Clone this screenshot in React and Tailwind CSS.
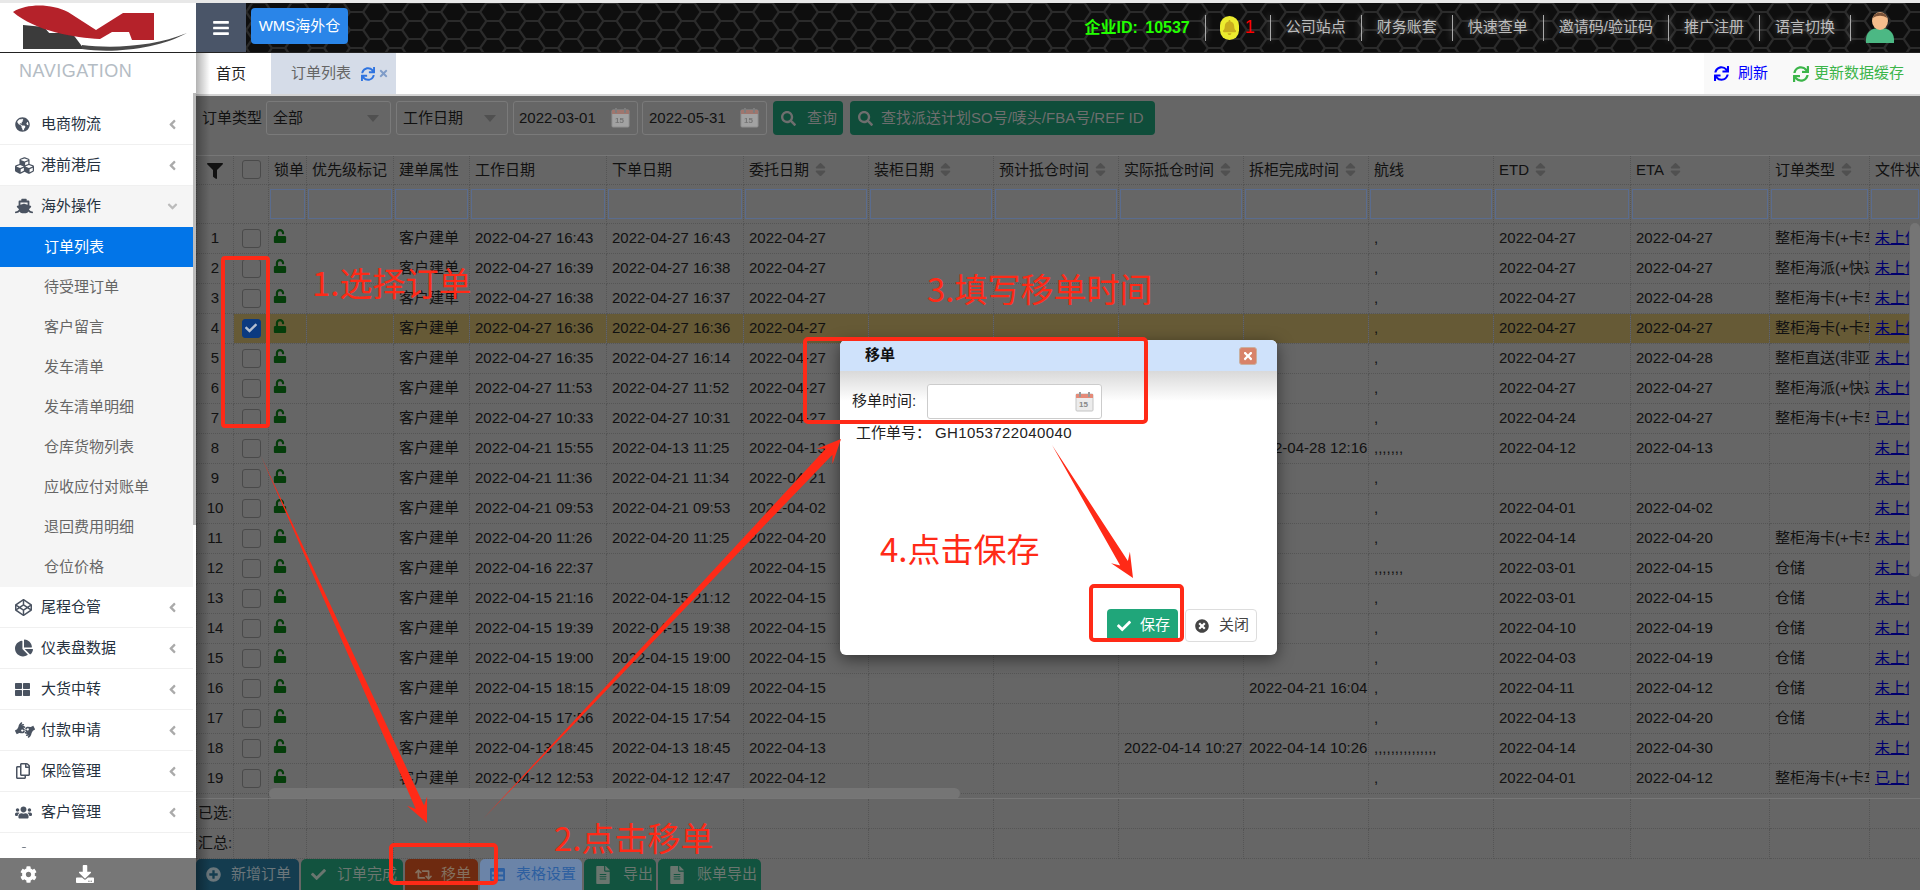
import React from 'react';
import {
  FaBars, FaBell, FaChartPie, FaCheck, FaCodepen, FaCog, FaCubes, FaDownload, FaFileAlt, FaFilter,
  FaGlobeAmericas, FaPlusCircle, FaRegCopy, FaRetweet, FaSearch, FaShip, FaSort, FaSync, FaTable,
  FaThLarge, FaTimes, FaTimesCircle, FaUnlock, FaUsers, FaAmericanSignLanguageInterpreting,
  FaAngleLeft, FaAngleDown,
} from 'react-icons/fa';

const colWidths = [37, 35, 38, 87, 76, 137, 137, 125, 125, 125, 125, 125, 125, 137, 139, 100, 51];

const heads = [
  ['锁单'], ['优先级标记'], ['建单属性'], ['工作日期'], ['下单日期'], ['委托日期', 1], ['装柜日期', 1],
  ['预计抵仓时间', 1], ['实际抵仓时间', 1], ['拆柜完成时间', 1], ['航线'], ['ETD', 1], ['ETA', 1], ['订单类型', 1], ['文件状态'],
];

const ka = '整柜海卡(+卡车派送)';
const pai = '整柜海派(+快递派送)';
const up = '未上传';

// work, order, entrust, actual, unpack, route, etd, eta, type, file
const rows = [
  ['2022-04-27 16:43', '2022-04-27 16:43', '2022-04-27', '', '', ',', '2022-04-27', '2022-04-27', ka, up],
  ['2022-04-27 16:39', '2022-04-27 16:38', '2022-04-27', '', '', ',', '2022-04-27', '2022-04-27', pai, up],
  ['2022-04-27 16:38', '2022-04-27 16:37', '2022-04-27', '', '', ',', '2022-04-27', '2022-04-28', ka, up],
  ['2022-04-27 16:36', '2022-04-27 16:36', '2022-04-27', '', '', ',', '2022-04-27', '2022-04-27', ka, up],
  ['2022-04-27 16:35', '2022-04-27 16:14', '2022-04-27', '', '', ',', '2022-04-27', '2022-04-28', '整柜直送(非亚马逊)', up],
  ['2022-04-27 11:53', '2022-04-27 11:52', '2022-04-27', '', '', ',', '2022-04-27', '2022-04-27', pai, up],
  ['2022-04-27 10:33', '2022-04-27 10:31', '2022-04-27', '', '', ',', '2022-04-24', '2022-04-27', ka, '已上传'],
  ['2022-04-21 15:55', '2022-04-13 11:25', '2022-04-13', '', '2022-04-28 12:16', ',,,,,,,', '2022-04-12', '2022-04-13', '', up],
  ['2022-04-21 11:36', '2022-04-21 11:34', '2022-04-21', '', '', ',', '', '', '', up],
  ['2022-04-21 09:53', '2022-04-21 09:53', '2022-04-02', '', '', ',', '2022-04-01', '2022-04-02', '', up],
  ['2022-04-20 11:26', '2022-04-20 11:25', '2022-04-20', '', '', ',', '2022-04-14', '2022-04-20', ka, up],
  ['2022-04-16 22:37', '', '2022-04-15', '', '', ',,,,,,,', '2022-03-01', '2022-04-15', '仓储', up],
  ['2022-04-15 21:16', '2022-04-15 21:12', '2022-04-15', '', '', ',', '2022-03-01', '2022-04-15', '仓储', up],
  ['2022-04-15 19:39', '2022-04-15 19:38', '2022-04-15', '', '', ',', '2022-04-10', '2022-04-19', '仓储', up],
  ['2022-04-15 19:00', '2022-04-15 19:00', '2022-04-15', '', '', ',', '2022-04-03', '2022-04-19', '仓储', up],
  ['2022-04-15 18:15', '2022-04-15 18:09', '2022-04-15', '', '2022-04-21 16:04', ',', '2022-04-11', '2022-04-12', '仓储', up],
  ['2022-04-15 17:56', '2022-04-15 17:54', '2022-04-15', '', '', ',', '2022-04-13', '2022-04-20', '仓储', up],
  ['2022-04-13 18:45', '2022-04-13 18:45', '2022-04-13', '2022-04-14 10:27', '2022-04-14 10:26', ',,,,,,,,,,,,,,,', '2022-04-14', '2022-04-30', '', up],
  ['2022-04-12 12:53', '2022-04-12 12:47', '2022-04-12', '', '', ',', '2022-04-01', '2022-04-12', ka, '已上传'],
];

const cell = 'border border-dotted border-[#555] px-[5px] overflow-hidden whitespace-nowrap';

const Cols = () => (
  <colgroup>
    {colWidths.map((w, i) => <col key={i} style={{ width: w }} />)}
  </colgroup>
);

const Check = ({ on }) => (
  <div className={`w-[19px] h-[19px] rounded-[3px] border-[1.5px] mx-auto flex items-center justify-center ${on ? 'bg-[#0b3a80] border-[#0b3a80]' : 'border-[#4a4a4a]'}`}>
    {on && <FaCheck className="text-[#b4bfd0] text-[12px]" />}
  </div>
);

const Row = ({ r, no }) => {
  const hl = no === 4 ? 'bg-[#665a36]' : '';
  const td = `${cell} ${hl}`;
  return (
    <tr className="h-[30px]">
      <td className={`${cell} text-center !px-0`}>{no}</td>
      <td className={`${td} !px-0`}><Check on={no === 4} /></td>
      <td className={`${td} align-top !px-0`}><FaUnlock className="text-[#053d0a] text-[14px] mt-[5px] ml-[4px]" /></td>
      <td className={td}></td>
      <td className={td}>客户建单</td>
      <td className={td}>{r[0]}</td>
      <td className={td}>{r[1]}</td>
      <td className={td}>{r[2]}</td>
      <td className={td}></td>
      <td className={td}></td>
      <td className={td}>{r[3]}</td>
      <td className={td}>{r[4]}</td>
      <td className={td}>{r[5]}</td>
      <td className={td}>{r[6]}</td>
      <td className={td}>{r[7]}</td>
      <td className={td}>{r[8]}</td>
      <td className={td}><span className="underline text-[#00006e]">{r[9]}</span></td>
    </tr>
  );
};

const OrderTable = () => (
  <div className="relative h-[644px] overflow-hidden">
    <table className="table-fixed border-collapse w-[1724px] text-[15px] text-[#111]">
      <Cols />
      <thead>
        <tr className="h-[29px] border-t border-[#777]">
          <th className={`${cell} font-normal !px-0`}><FaFilter className="text-[#111] text-[16px] mx-auto mt-[3px]" /></th>
          <th className={`${cell} font-normal !px-0`}><Check /></th>
          {heads.map(([t, sort]) => (
            <th key={t} className={`${cell} font-normal text-left`}>
              <span className="inline-flex items-center gap-[3px]">{t}{sort && <FaSort className="text-[#505050] text-[17px]" />}</span>
            </th>
          ))}
        </tr>
        <tr className="h-[39px]">
          <td className={cell}></td>
          <td className={cell}></td>
          {heads.map(([t]) => (
            <td key={t} className={`${cell} !px-[1px]`}>
              <div className="h-[30px] border border-[#5a6c8e]"></div>
            </td>
          ))}
        </tr>
      </thead>
      <tbody>
        {rows.map((r, i) => <Row key={i} r={r} no={i + 1} />)}
        <tr className="h-[30px]">
          <td className={cell}></td>
          <td className={`${cell} align-top !px-0 !pt-[5px]`}><Check /></td>
        </tr>
      </tbody>
    </table>
    {/* scrollbars */}
    <div className="absolute right-0 top-[68px] bottom-0 w-[11px] bg-[#666]">
      <div className="ml-[1px] w-[10px] h-[354px] rounded-full bg-[#757575]"></div>
    </div>
    <div className="absolute left-[73px] top-[633px] w-[691px] h-[11px] rounded-full bg-[#757575]"></div>
  </div>
);

const SummaryTable = () => (
  <table className="table-fixed border-collapse w-[1724px] text-[15px] text-[#111] border-t border-[#777]">
    <Cols />
    <tbody>
      {['已选:', '汇总:'].map((t) => (
        <tr key={t} className="h-[30px]">
          <td className={`${cell} !px-[1px]`}>{t}</td>
          {colWidths.slice(1).map((w, i) => <td key={i} className={cell}></td>)}
        </tr>
      ))}
    </tbody>
  </table>
);

const Calendar = () => (
  <svg width="19" height="20" viewBox="0 0 19 20">
    <rect x="1" y="2" width="17" height="17" rx="1" fill="#ececec" stroke="#c4c4c4" />
    <rect x="1" y="2" width="17" height="4" fill="#e58a78" />
    <rect x="4" y="0" width="2" height="5" fill="#999" />
    <rect x="13" y="0" width="2" height="5" fill="#999" />
    <text x="4" y="15" fontSize="8" fontWeight="700" fill="#888" fontFamily="Liberation Sans">15</text>
  </svg>
);

const DimCalendar = () => <div className="opacity-45"><Calendar /></div>;

const Dim = ({ className = '', children }) => (
  <div className={`h-[34px] border border-[#7a7a7a] rounded-[3px] flex items-center ${className}`}>{children}</div>
);

const Caret = () => <div className="ml-auto w-0 h-0 border-x-[6px] border-t-[7px] border-x-transparent border-t-[#505050]"></div>;

const Toolbar = () => (
  <div className="h-[59px] flex items-start pt-[5px] pl-[6px] text-[15px] text-[#111]">
    <span className="w-[60px] h-[34px] leading-[34px] whitespace-nowrap">订单类型</span>
    <Dim className="ml-[4px] w-[125px] pl-[6px] pr-[11px]">全部<Caret /></Dim>
    <Dim className="ml-[5px] w-[112px] pl-[6px] pr-[11px]">工作日期<Caret /></Dim>
    <Dim className="ml-[5px] w-[125px] pl-[5px] pr-[7px] justify-between">2022-03-01<DimCalendar /></Dim>
    <Dim className="ml-[4px] w-[125px] pl-[6px] pr-[7px] justify-between">2022-05-31<DimCalendar /></Dim>
    <button className="ml-[6px] w-[70px] h-[34px] rounded-[4px] bg-[#0f4d3a] text-[#6e6e6e] flex items-center pl-[8px] gap-[11px]">
      <FaSearch className="text-[15px]" />查询
    </button>
    <button className="ml-[7px] w-[305px] h-[34px] rounded-[4px] bg-[#0f4d3a] text-[#6e6e6e] flex items-center pl-[8px] gap-[8px] whitespace-nowrap">
      <FaSearch className="text-[15px]" />查找派送计划SO号/唛头/FBA号/REF ID
    </button>
  </div>
);

const bottomBtns = [
  { t: '新增订单', w: 'w-[103px] gap-[10px]', c: 'bg-[#143c4f] text-[#6a767b]', I: FaPlusCircle, s: 'text-[15px]' },
  { t: '订单完成', w: 'w-[102px] gap-[11px]', c: 'bg-[#12533f] text-[#6a766f]', I: FaCheck, s: 'text-[15px]' },
  { t: '移单', w: 'w-[73px] gap-[9px]', c: 'bg-[#6e2a10] text-[#84705f]', I: FaRetweet, s: 'text-[17px]' },
  { t: '表格设置', w: 'w-[102px] gap-[11px]', c: 'bg-[#6b84a8] text-[#2d5fa0]', I: FaTable, s: 'text-[15px]' },
  { t: '导出', w: 'w-[72px] gap-[11px]', c: 'bg-[#12533f] text-[#6a766f]', I: FaFileAlt, s: 'text-[18px]' },
  { t: '账单导出', w: 'w-[103px] gap-[11px]', c: 'bg-[#12533f] text-[#6a766f]', I: FaFileAlt, s: 'text-[18px]' },
];

const BottomBar = () => (
  <div className="h-[31px] flex gap-[2px] text-[15px]">
    {bottomBtns.map(({ t, w, c, I, s }) => (
      <div key={t} className={`${w} ${c} rounded-t-[5px] flex items-center pl-[10px] whitespace-nowrap`}>
        <I className={s} />{t}
      </div>
    ))}
  </div>
);

const Tabs = () => (
  <div className="h-[43px] bg-white border-b-2 border-[#d4d4d4] flex text-[15px]">
    <div className="w-[75px] pl-[20px] leading-[41px] text-[#222]">首页</div>
    <div className="w-[125px] h-[41px] bg-[#d5dce8] flex items-center pl-[20px] text-[#666]">
      订单列表
      <FaSync className="ml-[10px] text-[#2f74e0] text-[14px]" />
      <FaTimes className="ml-[3px] text-[#7f9cc8] text-[11px]" />
    </div>
    <div className="ml-auto w-[216px] bg-[#f9f9f9] flex items-center pl-[10px]">
      <FaSync className="text-[#0000ff] text-[15px]" />
      <span className="ml-[9px] text-[#0000ff]">刷新</span>
      <FaSync className="ml-[25px] text-[#3cb54a] text-[16px]" />
      <span className="ml-[5px] text-[#3cb54a] whitespace-nowrap">更新数据缓存</span>
    </div>
  </div>
);

const menuTop = [
  { t: '电商物流', I: FaGlobeAmericas, s: 'text-[15px]' },
  { t: '港前港后', I: FaCubes, s: 'text-[19px]' },
];
const subs = ['订单列表', '待受理订单', '客户留言', '发车清单', '发车清单明细', '仓库货物列表', '应收应付对账单', '退回费用明细', '仓位价格'];
const menuBottom = [
  { t: '尾程仓管', I: FaCodepen, s: 'text-[17px]' },
  { t: '仪表盘数据', I: FaChartPie, s: 'text-[18px]' },
  { t: '大货中转', I: FaThLarge, s: 'text-[15px]' },
  { t: '付款申请', I: FaAmericanSignLanguageInterpreting, s: 'text-[20px]' },
  { t: '保险管理', I: FaRegCopy, s: 'text-[16px]' },
  { t: '客户管理', I: FaUsers, s: 'text-[17px]' },
];

const MenuItem = ({ t, I, s = 'text-[18px]', open }) => (
  <div className={`h-[41px] flex items-center pl-[15px] pr-[13px] text-[15px] text-[#26323f] border-b ${open ? 'bg-[#f5f5f5] border-[#f5f5f5]' : 'border-[#f0f0f0]'}`}>
    <span className="w-[26px] text-[#4a5361]"><I className={s} /></span>
    {t}
    {open ? <FaAngleDown className="ml-auto text-[#bbb] text-[15px]" /> : <FaAngleLeft className="ml-auto text-[#aaa] text-[15px]" />}
  </div>
);

const Sidebar = () => (
  <aside className="relative w-[196px] h-full bg-white flex flex-col">
    <div className="h-[51px] pl-[19px] pt-[8px] text-[18px] leading-[20px] tracking-[0.5px] text-[#b4bcc4]">NAVIGATION</div>
    <nav className="w-[193px] h-[744px] overflow-hidden">
      {menuTop.map((m) => <MenuItem key={m.t} {...m} />)}
      <MenuItem t="海外操作" I={FaShip} open />
      <div className="bg-[#f5f5f5]">
        {subs.map((s, i) => (
          <div key={s} className={`h-[40px] leading-[40px] pl-[44px] text-[15px] ${i === 0 ? 'bg-[#0275e8] text-white' : 'text-[#666]'}`}>{s}</div>
        ))}
      </div>
      {menuBottom.map((m) => <MenuItem key={m.t} {...m} />)}
      <div className="pt-[3px]"><MenuItem t="系统设置" I={FaCog} /></div>
    </nav>
    <div className="absolute right-0 top-[40px] w-[3px] h-[432px] bg-[#bbb]"></div>
    <div className="mt-auto h-[32px] bg-[#777] flex items-center text-white">
      <FaCog className="ml-[20px] text-[17px]" />
      <FaDownload className="ml-[39px] text-[18px]" />
    </div>
  </aside>
);

const Logo = () => (
  <svg width="196" height="49" viewBox="0 0 196 49" className="shrink-0 bg-white">
    <defs><filter id="lb"><feGaussianBlur stdDeviation="0.7" /></filter></defs>
    <g filter="url(#lb)">
      <path d="M23 22 L44 24 L63 46 L45 46 L43 46 L23 46Z" fill="#3a3a3a" />
      <path d="M44 30 L72 30 L84 46 L60 46Z" fill="#3a3a3a" />
      <path d="M13 9 C28 0 52 1 68 9 L96 27 L123 10 L154 10 L154 37 L132 37 L129 29 L112 29 L100 36 C75 35 35 28 13 9Z" fill="#b5202c" />
      <path d="M82 42 C115 46 155 43 187 30 C160 45 115 51 82 46Z" fill="#4a4a4a" />
    </g>
  </svg>
);

const Honeycomb = () => (
  <svg className="absolute inset-0 w-full h-full">
    <defs>
      <pattern id="hex" width="39" height="18" patternUnits="userSpaceOnUse">
        <rect width="39" height="18" fill="#2b2b2b" />
        <g fill="#0e0e0e">
          <path d="M1.5 9 L7 1 L19 1 L24.5 9 L19 17 L7 17Z" />
          <path d="M21 0 L26.5 -8 L38.5 -8 L44 0 L38.5 8 L26.5 8Z" />
          <path d="M21 18 L26.5 10 L38.5 10 L44 18 L38.5 26 L26.5 26Z" />
          <path d="M-18 0 L-12.5 -8 L-0.5 -8 L5 0 L-0.5 8 L-12.5 8Z" />
          <path d="M-18 18 L-12.5 10 L-0.5 10 L5 18 L-0.5 26 L-12.5 26Z" />
        </g>
      </pattern>
    </defs>
    <rect width="100%" height="100%" fill="url(#hex)" />
  </svg>
);

const Sep = () => <div className="w-[1px] h-[26px] bg-[#aaa] shadow-[0_0_6px_rgba(255,255,255,0.6)]"></div>;

const Avatar = () => (
  <svg width="30" height="31" viewBox="0 0 30 31">
    <path d="M1 31 C0 20 6 16 15 16 C24 16 30 20 29 31Z" fill="#4cb884" />
    <ellipse cx="15" cy="9" rx="8" ry="9" fill="#f6bd8c" />
    <path d="M8 6 C9 -1 21 -1 22 6 C18 3 12 3 8 6Z" fill="#7a5238" />
  </svg>
);

const TopBar = () => (
  <div className="relative flex-1 h-full flex items-center">
    <Honeycomb />
    <div className="relative flex items-center w-full h-full">
      <button className="ml-[5px] w-[97px] h-[36px] mb-[3px] rounded-[4px] bg-[#2a85e8] text-white text-[15px] whitespace-nowrap">WMS海外仓</button>
      <div className="ml-auto flex items-center text-[15px] text-[#bdbdbd] [text-shadow:0_0_6px_rgba(255,255,255,0.35)] whitespace-nowrap pr-[25px]">
        <span className="font-bold text-[16px] text-[#22ff00] [text-shadow:none] pr-[15px]">企业ID:&nbsp;<span className="ml-[3px]">10537</span></span>
        <Sep />
        <div className="w-[19px] h-[24px] ml-[14px] rounded-full bg-[#ecec2e] flex items-center justify-center"><FaBell className="text-[#c9ae1e] text-[15px]" /></div>
        <span className="ml-[6px] mr-[15px] text-[#ff0000] text-[18px] [text-shadow:none]">1</span>
        {['公司站点', '财务账套', '快速查单', '邀请码/验证码', '推广注册', '语言切换'].map((t) => (
          <React.Fragment key={t}>
            <Sep />
            <span className="px-[15px]">{t}</span>
          </React.Fragment>
        ))}
        <Sep />
        <div className="ml-[14px]"><Avatar /></div>
      </div>
    </div>
  </div>
);

const Modal = () => (
  <div className="absolute left-[840px] top-[340px] w-[437px] h-[315px] bg-white rounded-[6px] shadow-[0_4px_16px_rgba(0,0,0,0.5)] flex flex-col text-[15px] text-[#222] overflow-hidden">
    <div className="h-[31px] shrink-0 bg-[#cfe2fb] flex items-center pl-[25px] font-bold text-[#111]">
      移单
      <div className="ml-auto mr-[20px] w-[18px] h-[18px] rounded-[3px] bg-[#d8836a] border border-[#c9b0a0] flex items-center justify-center">
        <FaTimes className="text-white text-[12px]" />
      </div>
    </div>
    <div className="h-[30px] -mb-[30px] bg-gradient-to-b from-[#d9d9d9] to-white"></div>
    <div className="relative flex items-center pl-[12px] mt-[13px]">
      <span className="w-[75px] whitespace-nowrap">移单时间:</span>
      <div className="w-[175px] h-[35px] bg-white border border-[#ccc] rounded-[3px] flex items-center justify-end pr-[7px]"><Calendar /></div>
    </div>
    <div className="relative pl-[16px] mt-[3px] text-[#222] whitespace-nowrap">工作单号：<span className="ml-[4px] tracking-[0.4px]">GH1053722040040</span></div>
    <div className="mt-auto mb-[13px] flex justify-end pr-[20px] gap-[7px] relative">
      <button className="w-[71px] h-[33px] rounded-[4px] bg-[#20a67a] text-white flex items-center pl-[10px] gap-[9px]"><FaCheck className="text-[14px]" />保存</button>
      <button className="w-[72px] h-[33px] rounded-[4px] border border-[#ddd] bg-white text-[#444] flex items-center pl-[9px] gap-[10px]"><FaTimesCircle className="text-[14px]" />关闭</button>
    </div>
  </div>
);

// red tapered arrow: thin at the start, wide at the head
const arrowPoints = (x1, y1, x2, y2, w, len, head) => {
  const d = Math.hypot(x2 - x1, y2 - y1);
  const ux = (x2 - x1) / d, uy = (y2 - y1) / d;
  const nx = -uy, ny = ux;
  const bx = x2 - ux * len * 0.72, by = y2 - uy * len * 0.72;
  const wx = x2 - ux * len, wy = y2 - uy * len;
  return [
    [x1, y1],
    [bx + nx * w, by + ny * w],
    [wx + nx * head, wy + ny * head],
    [x2, y2],
    [wx - nx * head, wy - ny * head],
    [bx - nx * w, by - ny * w],
  ].map((p) => p.map((v) => v.toFixed(1)).join(',')).join(' ');
};

const red = '#ff2a17';

const Annotations = () => (
  <>
    <svg className="absolute inset-0 pointer-events-none" width="1920" height="890">
      <g fill="none" stroke={red} strokeWidth="4">
        <rect x="223" y="258" width="45" height="168" rx="2" />
        <rect x="391" y="845" width="105" height="38" rx="3" />
        <rect x="805" y="339" width="341" height="83" rx="3" />
        <rect x="1091" y="586" width="91" height="54" rx="3" />
      </g>
      <g fill={red}>
        <polygon points={arrowPoints(261, 456, 427, 823, 4.5, 24, 11)} />
        <polygon points={arrowPoints(483, 819, 841, 439, 4.5, 24, 11)} />
        <polygon points={arrowPoints(1052, 445, 1133, 578, 4.5, 24, 11)} />
      </g>
    </svg>
    {[
      ['1.选择订单', 'left-[312px] top-[264px]'],
      ['3.填写移单时间', 'left-[927px] top-[270px]'],
      ['4.点击保存', 'left-[880px] top-[530px]'],
      ['2.点击移单', 'left-[554px] top-[819px]'],
    ].map(([t, pos]) => (
      <div key={t} className={`absolute ${pos} text-[33px] leading-[36px] whitespace-nowrap text-[#ff2a17] [font-family:'Noto_Sans_CJK_SC',sans-serif]`}>{t}</div>
    ))}
  </>
);

const App = () => (
  <div className="relative w-[1920px] h-[890px] overflow-hidden bg-white flex flex-col [font-family:'Liberation_Sans','Noto_Sans_CJK_SC',sans-serif]">
    <div className="h-[3px] shrink-0 bg-[#e8e8e8]"></div>
    <header className="h-[50px] shrink-0 flex border-b border-[#222]">
      <Logo />
      <div className="w-[50px] h-full bg-[#4a5568] flex items-center justify-center text-white shrink-0"><FaBars className="text-[18px]" /></div>
      <TopBar />
    </header>
    <div className="flex-1 flex min-h-0">
      <Sidebar />
      <main className="relative flex-1 min-w-0 bg-[#666] flex flex-col overflow-hidden">
        <Tabs />
        <Toolbar />
        <OrderTable />
        <SummaryTable />
        <div className="flex-1"></div>
        <BottomBar />
        <div className="absolute left-0 top-0 bottom-0 w-[14px] bg-gradient-to-r from-black/30 to-transparent pointer-events-none"></div>
      </main>
    </div>
    <Modal />
    <Annotations />
  </div>
);

export default App;
